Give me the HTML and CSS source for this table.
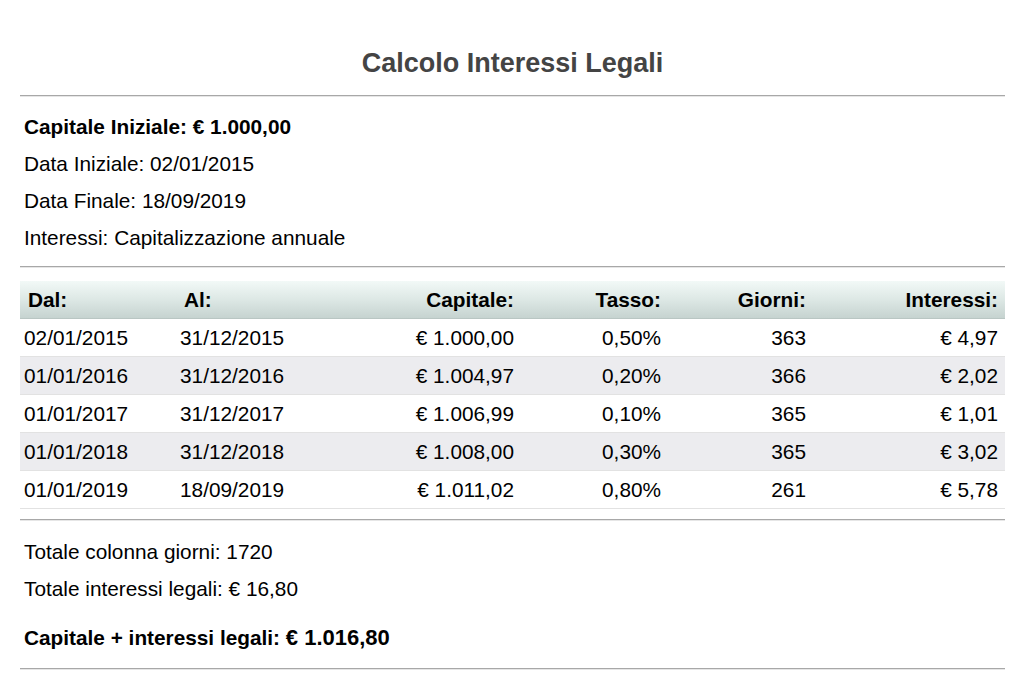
FILE: index.html
```html
<!DOCTYPE html>
<html lang="it">
<head>
<meta charset="utf-8">
<title>Calcolo Interessi Legali</title>
<link rel="stylesheet" href="styles.css">
</head>
<body>
<div class="page">
  <h1 class="title">Calcolo Interessi Legali</h1>
  <hr class="rule rule-title">
  <div class="info">
    <p class="line strong">Capitale Iniziale: € 1.000,00</p>
    <p class="line">Data Iniziale: 02/01/2015</p>
    <p class="line">Data Finale: 18/09/2019</p>
    <p class="line">Interessi: Capitalizzazione annuale</p>
  </div>
  <hr class="rule rule-info">
  <table class="grid">
    <colgroup>
      <col class="c1"><col class="c2"><col class="c3"><col class="c4"><col class="c5"><col class="c6">
    </colgroup>
    <thead>
      <tr>
        <th class="l">Dal:</th>
        <th class="l">Al:</th>
        <th class="r">Capitale:</th>
        <th class="r">Tasso:</th>
        <th class="r">Giorni:</th>
        <th class="r">Interessi:</th>
      </tr>
    </thead>
    <tbody>
      <tr><td class="l">02/01/2015</td><td class="l">31/12/2015</td><td class="r">€ 1.000,00</td><td class="r">0,50%</td><td class="r">363</td><td class="r">€ 4,97</td></tr>
      <tr class="alt"><td class="l">01/01/2016</td><td class="l">31/12/2016</td><td class="r">€ 1.004,97</td><td class="r">0,20%</td><td class="r">366</td><td class="r">€ 2,02</td></tr>
      <tr><td class="l">01/01/2017</td><td class="l">31/12/2017</td><td class="r">€ 1.006,99</td><td class="r">0,10%</td><td class="r">365</td><td class="r">€ 1,01</td></tr>
      <tr class="alt"><td class="l">01/01/2018</td><td class="l">31/12/2018</td><td class="r">€ 1.008,00</td><td class="r">0,30%</td><td class="r">365</td><td class="r">€ 3,02</td></tr>
      <tr><td class="l">01/01/2019</td><td class="l">18/09/2019</td><td class="r">€ 1.011,02</td><td class="r">0,80%</td><td class="r">261</td><td class="r">€ 5,78</td></tr>
    </tbody>
  </table>
  <hr class="rule rule-table">
  <div class="totals">
    <p class="line">Totale colonna giorni: 1720</p>
    <p class="line">Totale interessi legali: € 16,80</p>
    <p class="line strong final">Capitale + interessi legali: <span class="amount">€ 1.016,80</span></p>
  </div>
  <hr class="rule rule-end">
</div>
</body>
</html>
```

FILE: styles.css
```css
html, body {
  margin: 0;
  padding: 0;
  background: #ffffff;
}

body {
  font-family: "Liberation Sans", Arial, sans-serif;
  font-size: 20.8px;
  color: #000;
}

.page {
  padding: 0 19px 0 20px;
}

.title {
  margin: 0;
  padding-top: 47px;
  font-size: 27px;
  line-height: 32px;
  font-weight: bold;
  color: #444;
  text-align: center;
}

.rule {
  display: block;
  height: 0;
  margin: 0;
  border: 0;
  border-top: 1px solid #a8a8a8;
  border-bottom: 1px solid #e6e6e6;
}

.rule-title { margin-top: 16px; }
.rule-info { margin-top: 10px; }
.rule-table { margin-top: 10px; }
.rule-end { margin-top: 12px; }

.info {
  padding: 11px 0 0 4px;
}

.line {
  margin: 0;
  line-height: 37px;
}

.strong {
  font-weight: bold;
}

.totals {
  padding: 12px 0 0 4px;
}

.final {
  margin-top: 12px;
}

.amount {
  font-size: 22px;
}

.grid {
  width: 100%;
  margin-top: 13px;
  border-collapse: collapse;
  table-layout: fixed;
}

.c1 { width: 156px; }
.c2 { width: 170px; }
.c3 { width: 175px; }
.c4 { width: 147px; }
.c5 { width: 145px; }
.c6 { width: 192px; }

.grid th,
.grid td {
  height: 37px;
  padding: 0 7px 0 4px;
  font-size: 20.8px;
  white-space: nowrap;
  border-bottom: 1px solid #e2e2e2;
}

.grid th {
  font-weight: bold;
  background: linear-gradient(to bottom, #f2f9f7 0%, #dde8e5 50%, #c6d3d0 100%);
  border-bottom: 1px solid #b9c6c3;
}

.grid th.l {
  padding-left: 8px;
}

.grid .l { text-align: left; }
.grid .r { text-align: right; }

.grid tr.alt td {
  background: #ececef;
}
```
